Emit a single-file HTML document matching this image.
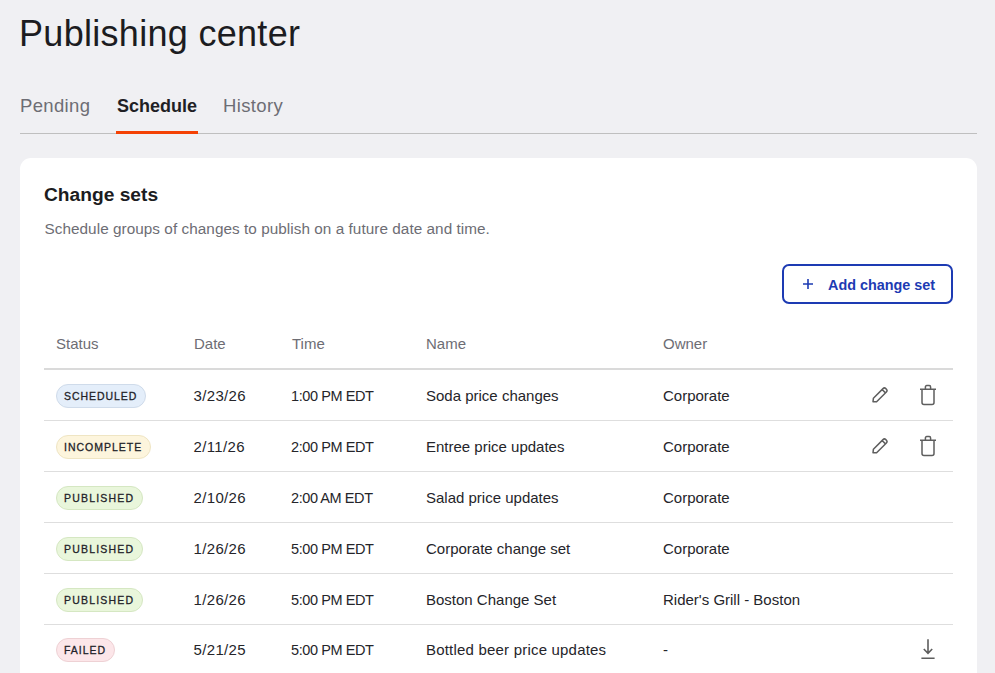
<!DOCTYPE html>
<html>
<head>
<meta charset="utf-8">
<style>
html,body{margin:0;padding:0;}
body{width:995px;height:673px;overflow:hidden;background:#f0f0f3;position:relative;font-family:"Liberation Sans",sans-serif;color:#26262b;}
.a{position:absolute;white-space:nowrap;}
.title{left:19px;top:16px;font-size:36px;line-height:36px;color:#1c1c21;letter-spacing:0.3px;}
.tab{top:95.5px;font-size:18.5px;line-height:20px;color:#6d6d74;letter-spacing:0.35px;}
.tab.on{color:#1f1f25;font-weight:bold;font-size:18px;letter-spacing:0;}
.tabline{left:20px;top:133px;width:957px;height:1px;background:#bfbfbf;}
.ul{left:116px;top:131px;width:82px;height:3px;background:#f44104;}
.card{left:20px;top:158px;width:957px;height:560px;background:#fff;border-radius:11px;}
.h2{left:44px;top:183px;font-size:19.2px;line-height:24px;font-weight:bold;color:#1c1c21;}
.sub{left:44.5px;top:218.5px;font-size:15.3px;line-height:20px;color:#6d6d74;letter-spacing:0.05px;}
.btn{left:782px;top:264px;width:167px;height:36px;border:2px solid #1d3bb3;border-radius:7px;}
.btntxt{left:828px;top:274.5px;font-size:14.4px;line-height:20px;font-weight:bold;color:#1d3bb3;}
.th{top:333.8px;font-size:15px;line-height:20px;color:#6d6d74;}
.hline{left:44px;top:368px;width:909px;height:2px;background:#dadada;}
.rline{left:44px;width:909px;height:1px;background:#dedede;}
.td{font-size:15px;line-height:20px;color:#25252a;}
.dt{letter-spacing:0.35px;}
.tm{letter-spacing:-0.42px;font-size:14.5px;}
.badge{left:56px;height:22px;border:1px solid;border-radius:12px;box-sizing:content-box;}
.bt{font-size:10.5px;line-height:12px;font-weight:normal;-webkit-text-stroke:0.28px #222228;color:#222228;}
svg{position:absolute;}
</style>
</head>
<body>
<div class="a title">Publishing center</div>
<div class="a tab" style="left:20px">Pending</div>
<div class="a tab on" style="left:117px">Schedule</div>
<div class="a tab" style="left:223px">History</div>
<div class="a tabline"></div>
<div class="a ul"></div>

<div class="a card"></div>
<div class="a h2">Change sets</div>
<div class="a sub">Schedule groups of changes to publish on a future date and time.</div>

<div class="a btn"></div>
<svg style="left:802px;top:278px" width="12" height="12" viewBox="0 0 12 12"><path d="M6 1v10M1 6h10" stroke="#1d3bb3" stroke-width="1.6" fill="none"/></svg>
<div class="a btntxt">Add change set</div>

<div class="a th" style="left:56px">Status</div>
<div class="a th" style="left:194px">Date</div>
<div class="a th" style="left:292px">Time</div>
<div class="a th" style="left:426px">Name</div>
<div class="a th" style="left:663px">Owner</div>
<div class="a hline"></div>

<div class="a rline" style="top:420px"></div>
<div class="a rline" style="top:471px"></div>
<div class="a rline" style="top:522px"></div>
<div class="a rline" style="top:573px"></div>
<div class="a rline" style="top:624px"></div>

<!-- row 1 -->
<div class="a badge" style="top:384px;width:88px;background:#e4eefa;border-color:#cfdbea"></div>
<div class="a bt" style="left:64px;top:390px;letter-spacing:0.95px">SCHEDULED</div>
<div class="a td dt" style="left:193.5px;top:385.6px">3/23/26</div>
<div class="a td tm" style="left:291px;top:385.6px">1:00 PM EDT</div>
<div class="a td" style="left:426px;top:385.6px">Soda price changes</div>
<div class="a td" style="left:663px;top:385.6px">Corporate</div>

<!-- row 2 -->
<div class="a badge" style="top:435px;width:93px;background:#fdf5dd;border-color:#efe5c3"></div>
<div class="a bt" style="left:64px;top:441px;letter-spacing:1.0px">INCOMPLETE</div>
<div class="a td dt" style="left:193.5px;top:436.6px">2/11/26</div>
<div class="a td tm" style="left:291px;top:436.6px">2:00 PM EDT</div>
<div class="a td" style="left:426px;top:436.6px">Entree price updates</div>
<div class="a td" style="left:663px;top:436.6px">Corporate</div>

<!-- row 3 -->
<div class="a badge" style="top:486px;width:85px;background:#e9f6db;border-color:#d5e7c2"></div>
<div class="a bt" style="left:64px;top:492px;letter-spacing:1.2px">PUBLISHED</div>
<div class="a td dt" style="left:193.5px;top:487.6px">2/10/26</div>
<div class="a td tm" style="left:291px;top:487.6px">2:00 AM EDT</div>
<div class="a td" style="left:426px;top:487.6px">Salad price updates</div>
<div class="a td" style="left:663px;top:487.6px">Corporate</div>

<!-- row 4 -->
<div class="a badge" style="top:537px;width:85px;background:#e9f6db;border-color:#d5e7c2"></div>
<div class="a bt" style="left:64px;top:543px;letter-spacing:1.2px">PUBLISHED</div>
<div class="a td dt" style="left:193.5px;top:538.6px">1/26/26</div>
<div class="a td tm" style="left:291px;top:538.6px">5:00 PM EDT</div>
<div class="a td" style="left:426px;top:538.6px">Corporate change set</div>
<div class="a td" style="left:663px;top:538.6px">Corporate</div>

<!-- row 5 -->
<div class="a badge" style="top:588px;width:85px;background:#e9f6db;border-color:#d5e7c2"></div>
<div class="a bt" style="left:64px;top:594px;letter-spacing:1.2px">PUBLISHED</div>
<div class="a td dt" style="left:193.5px;top:589.6px">1/26/26</div>
<div class="a td tm" style="left:291px;top:589.6px">5:00 PM EDT</div>
<div class="a td" style="left:426px;top:589.6px">Boston Change Set</div>
<div class="a td" style="left:663px;top:589.6px">Rider's Grill - Boston</div>

<!-- row 6 -->
<div class="a badge" style="top:638px;width:57px;background:#fce6e9;border-color:#eed1d4"></div>
<div class="a bt" style="left:64px;top:644px;letter-spacing:1.0px">FAILED</div>
<div class="a td dt" style="left:193.5px;top:639.6px">5/21/25</div>
<div class="a td tm" style="left:291px;top:639.6px">5:00 PM EDT</div>
<div class="a td" style="left:426px;top:639.6px;letter-spacing:0.2px">Bottled beer price updates</div>
<div class="a td" style="left:663px;top:639.6px">-</div>

<!-- icons row 1 -->
<svg style="left:870px;top:385px" width="20" height="20" viewBox="0 0 20 20"><path d="M3.0 16.8 L3.4 13.2 L13.0 3.6 Q14.4 2.2 15.8 3.6 L16.4 4.2 Q17.8 5.6 16.4 7.0 L6.6 16.8 Z M12.1 4.5 L15.5 7.9" stroke="#5e5e5e" stroke-width="1.5" fill="none" stroke-linejoin="round"/></svg>
<svg style="left:918px;top:384px" width="20" height="22" viewBox="0 0 20 22"><path d="M2 5.2H18 M4 5.2V18.4Q4 20.4 6 20.4H14Q16 20.4 16 18.4V5.2 M7.4 5.2V3Q7.4 1.6 8.8 1.6H11.2Q12.6 1.6 12.6 3V5.2" stroke="#5e5e5e" stroke-width="1.5" fill="none"/></svg>
<!-- icons row 2 -->
<svg style="left:870px;top:436px" width="20" height="20" viewBox="0 0 20 20"><path d="M3.0 16.8 L3.4 13.2 L13.0 3.6 Q14.4 2.2 15.8 3.6 L16.4 4.2 Q17.8 5.6 16.4 7.0 L6.6 16.8 Z M12.1 4.5 L15.5 7.9" stroke="#5e5e5e" stroke-width="1.5" fill="none" stroke-linejoin="round"/></svg>
<svg style="left:918px;top:435px" width="20" height="22" viewBox="0 0 20 22"><path d="M2 5.2H18 M4 5.2V18.4Q4 20.4 6 20.4H14Q16 20.4 16 18.4V5.2 M7.4 5.2V3Q7.4 1.6 8.8 1.6H11.2Q12.6 1.6 12.6 3V5.2" stroke="#5e5e5e" stroke-width="1.5" fill="none"/></svg>
<!-- download row 6 -->
<svg style="left:918px;top:636px" width="20" height="26" viewBox="0 0 20 26"><path d="M10 3.2V17 M5.8 13L10 17.3L14.2 13 M3.4 22.2H16.6" stroke="#5e5e5e" stroke-width="1.6" fill="none"/></svg>
</body>
</html>
